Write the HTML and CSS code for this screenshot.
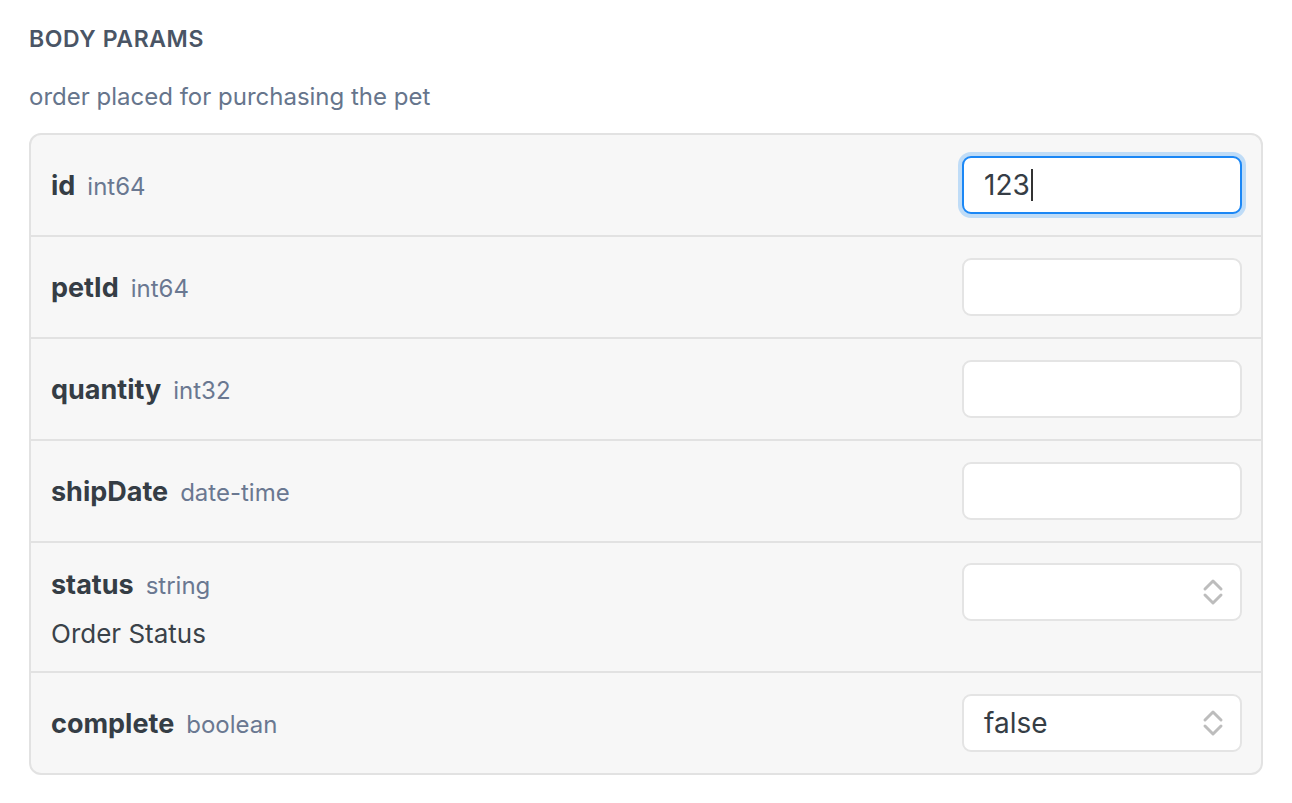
FILE: index.html
```html
<!DOCTYPE html>
<html>
<head>
<meta charset="utf-8">
<link rel="stylesheet" href="styles.css">
</head>
<body>
<div class="page">
  <h2 class="heading">BODY PARAMS</h2>
  <p class="desc">order placed for purchasing the pet</p>
  <div class="params">
    <div class="row">
      <div class="label"><span class="name">id</span><span class="type">int64</span></div>
      <div class="control"><div class="input focused"><span class="val">123</span><span class="caret"></span></div></div>
    </div>
    <div class="row">
      <div class="label"><span class="name">petId</span><span class="type">int64</span></div>
      <div class="control"><div class="input"></div></div>
    </div>
    <div class="row">
      <div class="label"><span class="name">quantity</span><span class="type">int32</span></div>
      <div class="control"><div class="input"></div></div>
    </div>
    <div class="row">
      <div class="label"><span class="name">shipDate</span><span class="type">date-time</span></div>
      <div class="control"><div class="input"></div></div>
    </div>
    <div class="row top">
      <div class="label">
        <div class="line"><span class="name">status</span><span class="type">string</span></div>
        <div class="note">Order Status</div>
      </div>
      <div class="control"><div class="input select"><span class="val"></span>
        <svg class="chev" width="22" height="30" viewBox="0 0 22 30"><path d="M3 12 L11 4 L19 12" fill="none" stroke="#bdbdbd" stroke-width="3" stroke-linecap="round" stroke-linejoin="round"/><path d="M3 18 L11 26 L19 18" fill="none" stroke="#bdbdbd" stroke-width="3" stroke-linecap="round" stroke-linejoin="round"/></svg>
      </div></div>
    </div>
    <div class="row">
      <div class="label"><span class="name">complete</span><span class="type">boolean</span></div>
      <div class="control"><div class="input select"><span class="val">false</span>
        <svg class="chev" width="22" height="30" viewBox="0 0 22 30"><path d="M3 12 L11 4 L19 12" fill="none" stroke="#bdbdbd" stroke-width="3" stroke-linecap="round" stroke-linejoin="round"/><path d="M3 18 L11 26 L19 18" fill="none" stroke="#bdbdbd" stroke-width="3" stroke-linecap="round" stroke-linejoin="round"/></svg>
      </div></div>
    </div>
  </div>
</div>
</body>
</html>
```
FILE: styles.css
```css
* { box-sizing: border-box; }
html, body { margin: 0; padding: 0; background: #ffffff; }
body { font-family: Inter, "Noto Sans", sans-serif; color: #384048; }
.page { padding: 25px 29px 0 29px; width: 1234px; box-sizing: content-box; }
.heading { margin: 0; font-size: 23px; font-weight: 600; color: #4a5565; letter-spacing: 0.6px; line-height: 28px; }
.desc { margin: 30px 0 0 0; font-size: 24px; color: #66758c; line-height: 28px; }
.params { margin-top: 22px; border: 2px solid #e2e2e2; border-radius: 12px; background: #f7f7f7; }
.row { display: flex; justify-content: space-between; align-items: center; padding: 20px 19px 20px 20px; border-top: 2px solid #e2e2e2; min-height: 102px; }
.row:first-child { border-top: none; min-height: 100px; }
.row.top { align-items: flex-start; padding-bottom: 19px; }
.label { display: flex; align-items: baseline; gap: 12px; }
.row.top .label { flex-direction: column; gap: 0; align-items: flex-start; }
.line { display: flex; align-items: baseline; gap: 12px; height: 44px; line-height: 44px; }
.note { font-size: 26px; color: #3a4249; line-height: 36px; margin-top: 9px; }
.name { font-size: 27px; font-weight: 700; color: #353d45; }
.type { font-size: 24px; color: #6a7891; }
.input { width: 280px; height: 58px; background: #fff; border: 2px solid #e4e4e4; border-radius: 9px; display: flex; align-items: center; padding: 0 20px; font-size: 28px; color: #353d45; }
.input.focused { border-color: #1b87f5; box-shadow: 0 0 0 4px #bfdcf7; }
.caret { display: inline-block; width: 2px; height: 32px; background: #333; margin-left: 1px; }
.select { justify-content: space-between; padding-right: 16px; }
.chev { display: block; }
```
